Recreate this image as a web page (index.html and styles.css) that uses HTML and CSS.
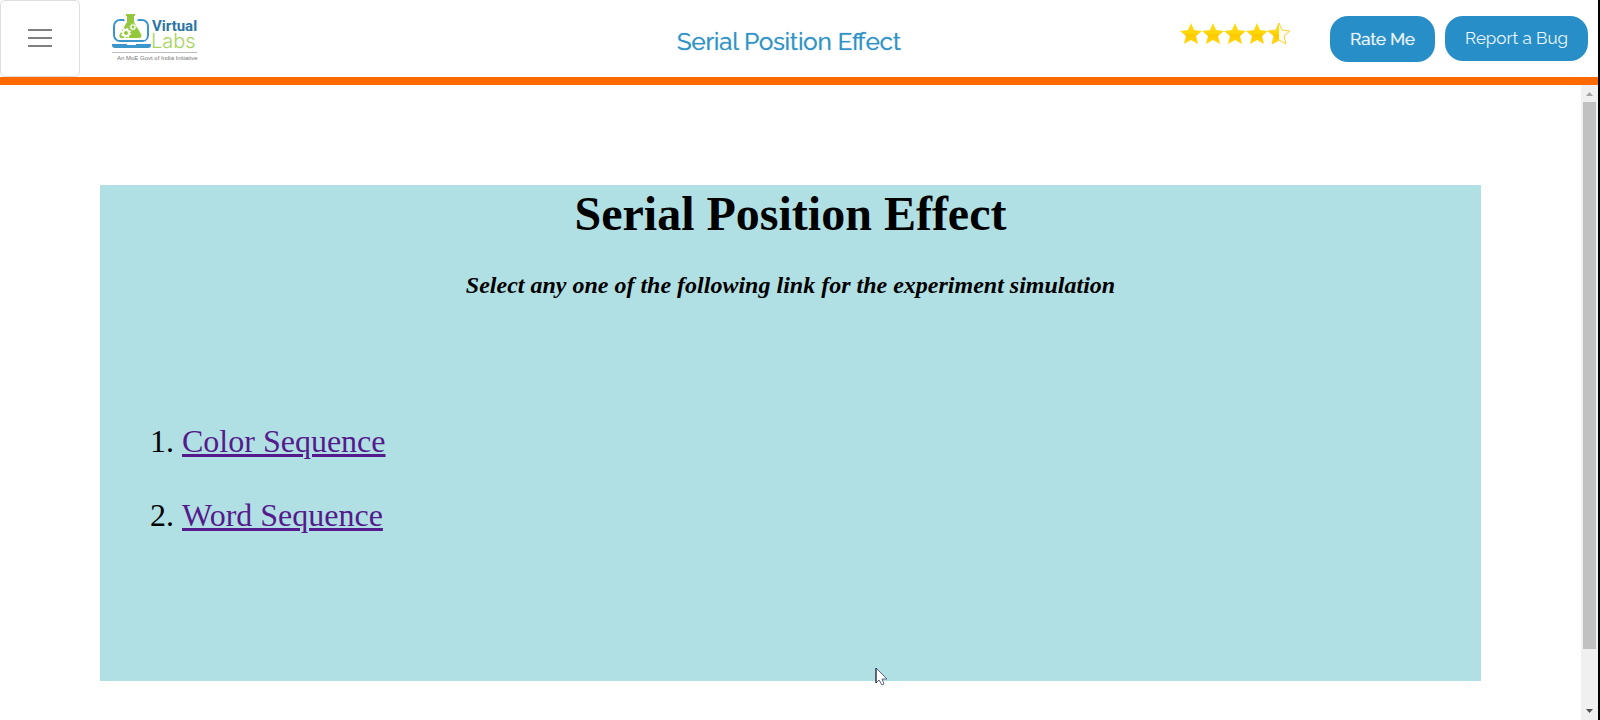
FILE: index.html
```html
<!DOCTYPE html>
<html lang="en">
<head>
<meta charset="utf-8">
<meta name="viewport" content="width=device-width, initial-scale=1">
<title>Serial Position Effect</title>
<link rel="stylesheet" href="styles.css">
</head>
<body>
<header class="topbar">
  <div class="topbar-left">
    <button class="menu-button" type="button" aria-label="Menu">
      <span class="menu-line"></span>
      <span class="menu-line"></span>
      <span class="menu-line"></span>
    </button>
    <a class="logo" href="#" aria-label="Virtual Labs">
      <svg width="90" height="50" viewBox="0 0 90 50">
        <rect x="4" y="7" width="34" height="21" rx="6" fill="none" stroke="#3a96cb" stroke-width="2"/>
        <path d="M14 0h14v7h-1l9 15q2 5-3 5H10q-5 0-3-5l8-15h-1z" fill="#fff"/>
        <path d="M16 1h9v2h-1v6l7 12q2 4-3 4H12q-4 0-2-4l7-12V3h-1z" fill="#93c83d"/>
        <circle cx="16" cy="20" r="3" fill="none" stroke="#fff" stroke-width="2"/>
        <circle cx="16" cy="20" r="4.500" fill="none" stroke="#fff" stroke-width="1.400" stroke-dasharray="1.800 1.734"/>
        <circle cx="23" cy="14" r="2" fill="none" stroke="#fff" stroke-width="1.200"/>
        <circle cx="23" cy="14" r="3" fill="none" stroke="#fff" stroke-dasharray="1.300 1.056"/>
        <path d="M2 31h39v1q0 3-3 3H5q-3 0-3-3z" fill="#3a96cb"/>
        <path d="M17 31h9v1h-9z" fill="#fff"/>
        <text class="logo-virtual" x="42" y="18">Virtual</text>
        <text class="logo-labs" x="41" y="35">Labs</text>
        <path d="M2 39.500H87" stroke="#bcbcbc"/>
        <text class="logo-caption" x="7" y="47">An MoE Govt of India Initiative</text>
      </svg>
    </a>
  </div>
  <h2 class="topbar-title">Serial Position Effect</h2>
  <div class="topbar-right">
    <svg class="stars" width="112" height="24" viewBox="0 0 112 24" role="img" aria-label="4.5 out of 5 stars">
      <defs>
        <linearGradient id="gold" x1="0" y1="0" x2="0" y2="1">
          <stop offset="0" stop-color="#ffdc0c"/>
          <stop offset=".5" stop-color="#ffd60a"/>
          <stop offset=".55" stop-color="#fdc800"/>
          <stop offset="1" stop-color="#ffd80a"/>
        </linearGradient>
        <path id="star" d="M11 1l3 7 8 1-6 5 2 8-7-4-7 4 2-8-6-5 8-1z"/>
      </defs>
      <use href="#star" fill="url(#gold)"/>
      <use href="#star" x="22" fill="url(#gold)"/>
      <use href="#star" x="44" fill="url(#gold)"/>
      <use href="#star" x="66" fill="url(#gold)"/>
      <use href="#star" x="88" fill="#fffdf0" stroke="#fbd03a"/>
      <path d="M99 1v17l-7 4 2-8-6-5 8-1z" fill="url(#gold)"/>
    </svg>
    <div class="actions">
      <button class="pill pill-strong" type="button">Rate Me</button>
      <button class="pill" type="button">Report a Bug</button>
    </div>
  </div>
</header>
<div class="viewport">
  <main class="page">
    <section class="panel">
      <h1 class="panel-title">Serial Position Effect</h1>
      <p class="panel-intro">Select any one of the following link for the experiment simulation</p>
      <ol class="links">
        <li><a href="#">Color Sequence</a></li>
        <li><a href="#">Word Sequence</a></li>
      </ol>
    </section>
  </main>
  <div class="scrollbar" aria-hidden="true">
    <svg class="arrow" width="17" height="17" viewBox="0 0 17 17"><path d="M5 11h7L8.500 7z" fill="#a3a3a3"/></svg>
    <div class="track"><div class="thumb"></div></div>
    <svg class="arrow" width="17" height="17" viewBox="0 0 17 17"><path d="M5 6h7L8.500 10z" fill="#505050"/></svg>
  </div>
</div>
<svg class="cursor" width="13" height="20" viewBox="0 0 13 20" aria-hidden="true">
  <path d="M1 1v15l3-3 3 5 2-1-2-5h5z" fill="#fff" stroke="#5a6680"/>
  <path d="M1 1v15" stroke="#1c2040"/>
</svg>
</body>
</html>
```
FILE: styles.css
```css
* {
  box-sizing: border-box;
}

body {
  margin: 0;
  height: 100vh;
  display: flex;
  flex-direction: column;
  overflow: hidden;
  background: #fff;
  border-right: 2px solid #000;
  font-family: "Liberation Serif", "Times New Roman", serif;
  color: #000;
}

.topbar {
  display: grid;
  grid-template-columns: 1fr auto 1fr;
  align-items: start;
  border-bottom: 8px solid #ff6a00;
  font-family: Raleway, Lato, sans-serif;
}

.topbar-left {
  display: flex;
  gap: 30px;
}

.menu-button {
  width: 80px;
  height: 77px;
  display: flex;
  flex-direction: column;
  align-items: center;
  justify-content: center;
  gap: 6px;
  padding: 0 0 2px;
  background: #fff;
  border: 1px solid #dedede;
  border-radius: 5px;
}

.menu-line {
  width: 24px;
  height: 2px;
  background: #808080;
}

.logo {
  padding-top: 13px;
}

.logo svg {
  display: block;
}

.logo-virtual {
  font: bold 15px Roboto, sans-serif;
  fill: #2b75a5;
}

.logo-labs {
  font: 300 20px Inter, sans-serif;
  fill: #a5d35c;
}

.logo-caption {
  font: 6px "Liberation Sans", sans-serif;
  fill: #777;
}

.topbar-title {
  margin: 0;
  padding: 26px 20px 0 0;
  font-size: 24px;
  line-height: 32px;
  font-weight: 400;
  color: #3292c6;
  text-shadow: 0 0 1px #3292c6;
}

.topbar-right {
  display: flex;
  justify-content: flex-end;
  gap: 38px;
  padding: 16px 10px 0 0;
}

.stars {
  margin-top: 6px;
}

.actions {
  display: flex;
  align-items: flex-start;
  gap: 10px;
}

.pill {
  padding: 0 20px;
  border: 0;
  border-radius: 18px;
  background: #288ec8;
  color: #eaf6fd;
  font-family: inherit;
  font-size: 17px;
  line-height: 45px;
}

.pill-strong {
  line-height: 46px;
  text-shadow: 0 0 1px #eaf6fd;
}

.viewport {
  flex: 1;
  min-height: 0;
  display: flex;
}

.page {
  flex: 1;
  padding: 100px 100px 0;
}

.panel {
  min-height: 496px;
  background: #b0e0e4;
}

.panel-title {
  margin: 0;
  font-size: 48px;
  line-height: 58px;
  text-align: center;
}

.panel-intro {
  margin: 28px 0 0;
  font-size: 24px;
  line-height: 28px;
  font-weight: bold;
  font-style: italic;
  text-align: center;
}

.links {
  margin: 123px 0 0;
  padding-left: 82px;
  font-size: 32px;
  line-height: 38px;
}

.links li + li {
  margin-top: 36px;
}

.links a {
  color: #551a8b;
}

.scrollbar {
  width: 17px;
  display: flex;
  flex-direction: column;
  background: #f0f0f0;
}

.arrow {
  display: block;
  flex: none;
}

.track {
  flex: 1;
  padding: 0 2px;
}

.thumb {
  height: 91%;
  background: #c1c1c1;
}

.cursor {
  position: absolute;
  left: 875px;
  top: 667px;
}
```
